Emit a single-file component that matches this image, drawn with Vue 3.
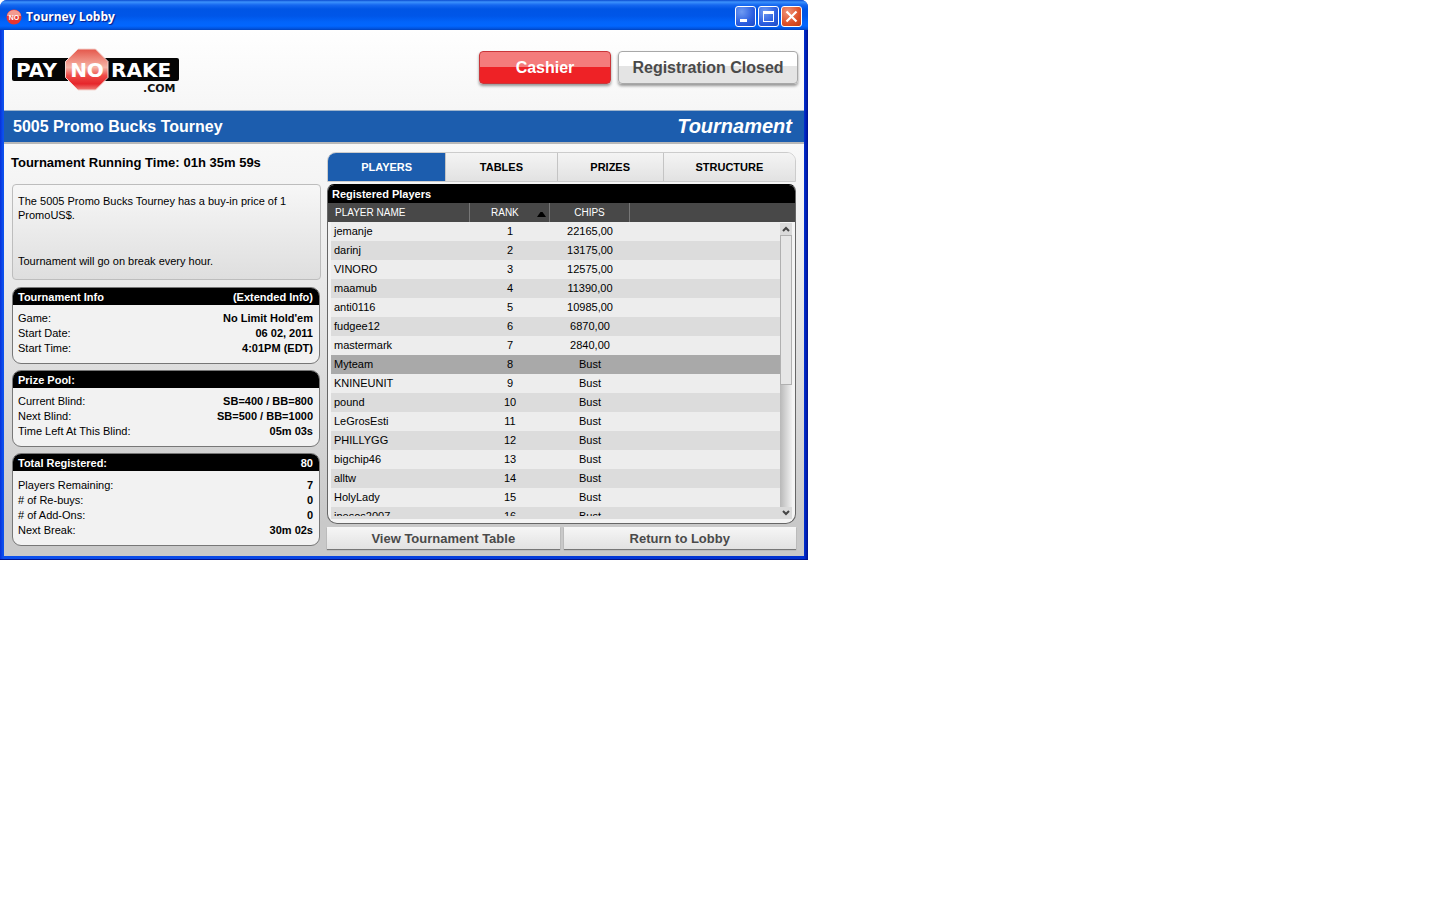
<script setup>
import { ref } from 'vue'

const tabs = ['PLAYERS', 'TABLES', 'PRIZES', 'STRUCTURE']
const active = ref('PLAYERS')
const selected = ref('Myteam')

const panels = [
  {
    title: 'Tournament Info',
    note: '(Extended Info)',
    rows: [
      ['Game:', "No Limit Hold'em"],
      ['Start Date:', '06 02, 2011'],
      ['Start Time:', '4:01PM (EDT)'],
    ],
  },
  {
    title: 'Prize Pool:',
    note: '',
    rows: [
      ['Current Blind:', 'SB=400 / BB=800'],
      ['Next Blind:', 'SB=500 / BB=1000'],
      ['Time Left At This Blind:', '05m 03s'],
    ],
  },
  {
    title: 'Total Registered:',
    note: '80',
    rows: [
      ['Players Remaining:', '7'],
      ['# of Re-buys:', '0'],
      ['# of Add-Ons:', '0'],
      ['Next Break:', '30m 02s'],
    ],
  },
]

const players = [
  ['jemanje', '22165,00'],
  ['darinj', '13175,00'],
  ['VINORO', '12575,00'],
  ['maamub', '11390,00'],
  ['anti0116', '10985,00'],
  ['fudgee12', '6870,00'],
  ['mastermark', '2840,00'],
  ['Myteam', 'Bust'],
  ['KNINEUNIT', 'Bust'],
  ['pound', 'Bust'],
  ['LeGrosEsti', 'Bust'],
  ['PHILLYGG', 'Bust'],
  ['bigchip46', 'Bust'],
  ['alltw', 'Bust'],
  ['HolyLady', 'Bust'],
  ['ipesos2007', 'Bust'],
]
</script>

<template>
  <main class="window">
    <header class="titlebar">
      <svg class="app-icon" viewBox="0 0 16 16" aria-hidden="true">
        <circle cx="8" cy="8" r="7.5" fill="#e8352f" />
        <path d="M1 7a7 6 0 0 1 14 0z" fill="#f39a90" />
        <text x="8" y="11" text-anchor="middle" class="icon-text">NO</text>
      </svg>
      <h1>Tourney Lobby</h1>
      <div class="controls">
        <button type="button" class="ctl" aria-label="Minimize">
          <svg viewBox="0 0 21 21"><path d="M5 13h7v3H5z" fill="#fff" /></svg>
        </button>
        <button type="button" class="ctl" aria-label="Maximize">
          <svg viewBox="0 0 21 21"><path d="M5 5h11v11H5zM6 8v7h9V8z" fill="#fff" fill-rule="evenodd" /></svg>
        </button>
        <button type="button" class="ctl close" aria-label="Close">
          <svg viewBox="0 0 21 21"><path d="M5.500 5.500l10 10M15.500 5.500l-10 10" stroke="#fff" stroke-width="2.200" fill="none" /></svg>
        </button>
      </div>
    </header>

    <div class="client">
      <div class="brand">
        <svg class="logo" viewBox="0 0 170 50" role="img" aria-label="PayNoRake.com">
          <defs>
            <linearGradient id="sign" x1="0" y1="0" x2="0" y2="1">
              <stop offset="0" stop-color="#e4564a" />
              <stop offset="0.450" stop-color="#f6b4a6" />
              <stop offset="0.650" stop-color="#ee4a46" />
              <stop offset="0.850" stop-color="#e6262b" />
              <stop offset="1" stop-color="#f08078" />
            </linearGradient>
          </defs>
          <rect x="0" y="9" width="167" height="23" rx="2" fill="#050505" />
          <path d="M66 0h17.500l12.500 12.500v16L83.500 41H66L53.500 28.500v-16z" fill="url(#sign)" stroke="#f3d5d0" stroke-width="1" />
          <text x="4" y="28" class="word">PAY</text>
          <text x="75" y="28" class="word" text-anchor="middle">NO</text>
          <text x="99" y="28" class="word">RAKE</text>
          <text x="131" y="43" class="dotcom">.COM</text>
        </svg>
        <div class="actions">
          <button type="button" class="big red">Cashier</button>
          <button type="button" class="big grey">Registration Closed</button>
        </div>
      </div>

      <div class="banner">
        <h2>5005 Promo Bucks Tourney</h2>
        <strong>Tournament</strong>
      </div>

      <div class="body">
        <section class="left">
          <p class="running"><span>Tournament Running Time:</span><span>01h 35m 59s</span></p>
          <div class="descr">
            <p>The 5005 Promo Bucks Tourney has a buy-in price of 1 PromoUS$.</p>
            <p>Tournament will go on break every hour.</p>
          </div>
          <section v-for="p in panels" :key="p.title" class="panel">
            <h3><span>{{ p.title }}</span><span>{{ p.note }}</span></h3>
            <dl>
              <div v-for="r in p.rows" :key="r[0]"><dt>{{ r[0] }}</dt><dd>{{ r[1] }}</dd></div>
            </dl>
          </section>
        </section>

        <section class="right">
          <nav class="tabs">
            <button v-for="t in tabs" :key="t" type="button" :class="{ on: t === active }" @click="active = t">{{ t }}</button>
          </nav>
          <div class="list">
            <h3>Registered Players</h3>
            <table>
              <thead>
                <tr>
                  <th>PLAYER NAME</th>
                  <th>RANK<svg class="sort" viewBox="0 0 9 5" aria-hidden="true"><path d="M0 5L3.500 0h2L9 5z" fill="#000" /></svg></th>
                  <th>CHIPS</th>
                  <th></th>
                </tr>
              </thead>
              <tbody>
                <tr v-for="(p, i) in players" :key="p[0]" :class="{ sel: p[0] === selected }" @click="selected = p[0]">
                  <td>{{ p[0] }}</td>
                  <td>{{ i + 1 }}</td>
                  <td>{{ p[1] }}</td>
                  <td></td>
                </tr>
              </tbody>
            </table>
            <div class="scroll">
              <button type="button" aria-label="Scroll up"><svg viewBox="0 0 12 12"><path d="M3 8l3-3 3 3" /></svg></button>
              <div class="track"><div class="thumb"></div></div>
              <button type="button" aria-label="Scroll down"><svg viewBox="0 0 12 12"><path d="M3 4l3 3 3-3" /></svg></button>
            </div>
          </div>
          <div class="bottom">
            <button type="button">View Tournament Table</button>
            <button type="button">Return to Lobby</button>
          </div>
        </section>
      </div>
    </div>
  </main>
</template>

<style>
body { background: #fff; }
</style>

<style scoped>
* { box-sizing: border-box; }
h1, h2, h3, p, dl, dd { margin: 0; }
button { font: inherit; padding: 0; border: 0; cursor: pointer; }
svg { display: block; }

.window {
  max-width: 808px;
  font: 11px/15px "Liberation Sans", Arial, sans-serif;
  color: #000;
  padding: 0 4px 3px;
  background: linear-gradient(90deg, #0831d9 0, #0c50ee 3px, #0c50ee 4px, #0030d0 calc(100% - 4px), #0020b8 calc(100% - 2px), #00138c 100%);
  border-bottom: 1px solid #00138c;
  border-radius: 7px 7px 0 0;
  overflow: hidden;
}
.titlebar {
  height: 30px;
  margin: 0 -4px;
  padding: 3px 6px 0 6px;
  display: flex;
  align-items: center;
  background: linear-gradient(#0a4bd0 0, #3c92fc 2px, #1668f0 5px, #0055e5 9px, #0056e8 16px, #0264fa 22px, #0266ff 26px, #0150d8 29px, #0040b8 30px);
}
.app-icon { width: 16px; height: 16px; }
.icon-text { font: bold 7px "Liberation Sans", sans-serif; fill: #fff; }
.titlebar h1 {
  flex: 1;
  margin-left: 4px;
  font: bold 12px/16px "Open Sans", sans-serif;
  color: #fff;
  text-shadow: 1px 1px 1px #0a1883;
}
.controls { display: flex; gap: 2px; }
.ctl {
  width: 21px;
  height: 21px;
  border: 1px solid #fff;
  border-radius: 3px;
  background: radial-gradient(circle at 30% 25%, #6f9bf2, #2b5ee0 60%, #1d49c4);
}
.ctl svg { width: 21px; height: 21px; margin: -1px; }
.ctl.close { background: radial-gradient(circle at 30% 25%, #f0947a, #dd5028 60%, #c03c14); }

.client { background: #f5f5f5; }
.brand {
  height: 80px;
  padding: 19px 6px 0 8px;
  display: flex;
  justify-content: space-between;
  align-items: flex-start;
  background: linear-gradient(#fff, #f6f6f6);
}
.logo { width: 170px; height: 50px; overflow: visible; }
.word { font: bold 20px "DejaVu Sans", sans-serif; fill: #fff; }
.dotcom { font: bold 11px "DejaVu Sans", sans-serif; fill: #111; }
.actions { display: flex; gap: 7px; padding-top: 2px; }
.big {
  height: 33px;
  border-radius: 4px;
  font-size: 16px;
  font-weight: bold;
  box-shadow: 0 2px 3px #0006;
}
.red { width: 132px; color: #fff; border: 1px solid #c9363a; background: linear-gradient(#f47c7c 50%, #ee2226 50%); }
.grey { width: 180px; color: #4a4a4a; border: 1px solid #a8a8a8; background: linear-gradient(#fff 45%, #e4e4e4 45%); }

.banner {
  height: 34px;
  padding: 0 12px 2px 9px;
  display: flex;
  justify-content: space-between;
  align-items: center;
  color: #fff;
  background: #1c5dae;
  border-top: 1px solid #9fb4cc;
  border-bottom: 2px solid #b8b8b8;
}
.banner h2 { font-size: 16px; line-height: 20px; font-weight: bold; padding-top: 3px; }
.banner strong { font-size: 20px; line-height: 24px; font-style: italic; }

.body {
  display: grid;
  grid-template-columns: 309px 1fr;
  gap: 6px;
  padding: 8px 8px 7px;
  background: linear-gradient(#f8f8f8, #f0f0f0 20%, #c9c9c9 92%);
}
.running { font-size: 13px; line-height: 22px; font-weight: bold; margin-left: -1px; display: flex; gap: 4px; }
.descr {
  height: 96px;
  margin: 10px 0 7px;
  padding: 9px 5px 11px;
  display: flex;
  flex-direction: column;
  justify-content: space-between;
  line-height: 14px;
  border: 1px solid #bdbdbd;
  border-radius: 4px;
  background: linear-gradient(#f7f7f7, #dedede);
}
.panel {
  margin: 0 1px 6px 0;
  border: 1px solid #777;
  border-radius: 9px;
  background: #f2f2f2;
  overflow: hidden;
}
.panel:last-child { margin-bottom: 0; }
.panel h3 {
  display: flex;
  justify-content: space-between;
  height: 17px;
  padding: 0 6px 0 5px;
  font-size: 11px;
  line-height: 18px;
  color: #fff;
  background: #000;
}
.panel dl { padding: 6px 6px 7px 5px; }
.panel:last-child dl { padding-top: 7px; }
.panel dl div { display: flex; justify-content: space-between; }
.panel dd { font-weight: bold; }

.tabs {
  display: grid;
  grid-template-columns: 118fr 112fr 107fr 133fr;
  height: 30px;
  border: 1px solid #ccc;
  border-radius: 9px 9px 0 0;
  overflow: hidden;
  font-size: 11px;
  font-weight: bold;
}
.tabs button { background: linear-gradient(#f4f4f4, #e2e2e2); border-left: 1px solid #c4c4c4; }
.tabs button:first-child { border-left: 0; }
.tabs button.on { background: #1c5dae; color: #fff; }
.list {
  position: relative;
  margin-top: 2px;
  border: 1px solid #666;
  border-top-color: #000;
  border-radius: 7px 7px 10px 10px;
  background: #f4f4f4;
  overflow: hidden;
  padding-bottom: 4px;
}
.list h3 { font-size: 11px; line-height: 18px; padding-left: 4px; background: #000; color: #fff; }
table, thead, tbody { display: block; }
tr { display: grid; grid-template-columns: 139px 80px 80px 1fr; }
thead tr { grid-template-columns: 142px 80px 80px 1fr; height: 19px; background: #484848; color: #fff; }
th {
  position: relative;
  font-size: 10px;
  font-weight: normal;
  line-height: 19px;
  text-align: left;
  border-right: 1px solid #777;
  padding: 0 7px;
}
th:nth-child(2) { padding-left: 21px; }
th:nth-child(3) { text-align: center; }
th:last-child { border: 0; }
.sort { position: absolute; right: 3px; top: 9px; width: 9px; height: 5px; }
tbody { height: 297px; margin: 0 15px 0 3px; overflow: hidden; border-bottom: 3px solid #dcdcdc; }
tbody tr { height: 19px; line-height: 19px; background: #ededed; }
tbody tr:nth-child(even) { background: #dcdcdc; }
tbody tr.sel { background: #a9a9a9; }
td { padding: 0 3px; }
td:nth-child(2), td:nth-child(3) { text-align: center; }
.scroll { position: absolute; right: 3px; top: 38px; bottom: 4px; width: 12px; display: flex; flex-direction: column; }
.scroll button { height: 12px; background: #dadada; }
.scroll svg { width: 12px; height: 12px; fill: none; stroke: #444; stroke-width: 2; }
.track { flex: 1; background: linear-gradient(90deg, #b8b8b8, #f0f0f0); }
.thumb { height: 55%; background: #e6e6e6; border: 1px solid #b0b0b0; }
.bottom { display: grid; grid-template-columns: 1fr 1fr; gap: 4px; margin-top: 3px; }
.bottom button {
  height: 22px;
  font-size: 13px;
  font-weight: bold;
  color: #4a4a4a;
  background: linear-gradient(#f6f6f6, #e2e2e2);
  box-shadow: 0 1px 1px #777;
}
</style>
